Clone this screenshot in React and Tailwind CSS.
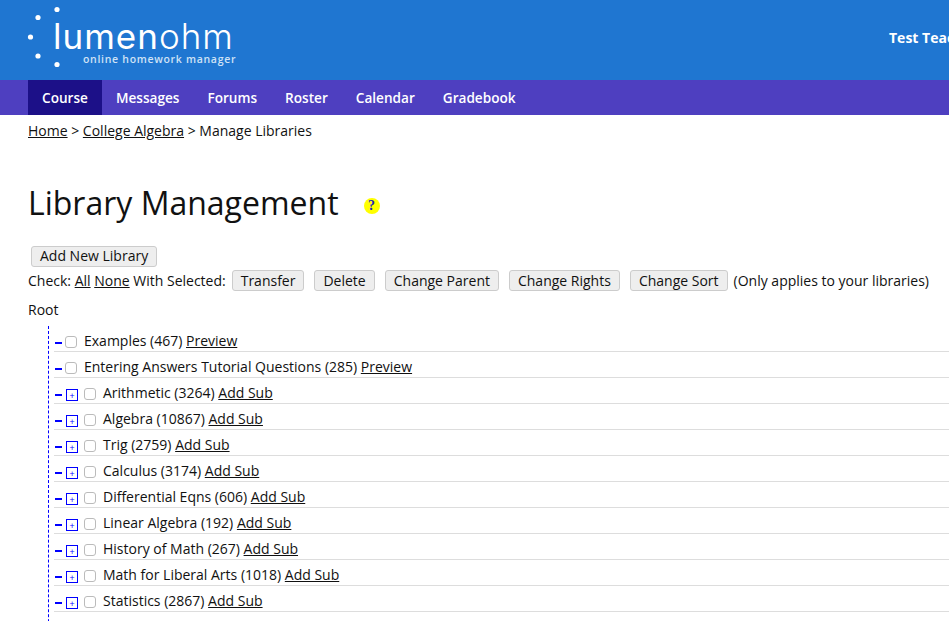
import React from 'react';

const libraries = [
    { name: 'Examples (467)', link: 'Preview' },
    { name: 'Entering Answers Tutorial Questions (285)', link: 'Preview' },
    { name: 'Arithmetic (3264)', link: 'Add Sub', folder: true },
    { name: 'Algebra (10867)', link: 'Add Sub', folder: true },
    { name: 'Trig (2759)', link: 'Add Sub', folder: true },
    { name: 'Calculus (3174)', link: 'Add Sub', folder: true },
    { name: 'Differential Eqns (606)', link: 'Add Sub', folder: true },
    { name: 'Linear Algebra (192)', link: 'Add Sub', folder: true },
    { name: 'History of Math (267)', link: 'Add Sub', folder: true },
    { name: 'Math for Liberal Arts (1018)', link: 'Add Sub', folder: true },
    { name: 'Statistics (2867)', link: 'Add Sub', folder: true },
];

const navItems = ['Messages', 'Forums', 'Roster', 'Calendar', 'Gradebook'];
const actions = ['Transfer', 'Delete', 'Change Parent', 'Change Rights', 'Change Sort'];

function Btn({ children }) {
    return (
        <span className="inline-flex h-[21px] items-center rounded-[3px] border border-[#ccc] bg-[#eee] px-2 text-[14px] leading-none text-[#111]">
            {children}
        </span>
    );
}

function Check() {
    return <span className="block h-3 w-3 shrink-0 rounded-[3px] border border-[#bbb] bg-white" />;
}

function Logo() {
    return (
        <div className="relative h-20 w-[889px] shrink-0 pl-[53px] pt-[21px]">
            <svg className="absolute left-0 top-0" width="70" height="80" viewBox="0 0 70 80" fill="white">
                <circle cx="57" cy="9.5" r="2.6" />
                <circle cx="38" cy="17.5" r="2.6" />
                <circle cx="30.5" cy="37" r="2.6" />
                <circle cx="38" cy="56" r="2.6" />
                <circle cx="57" cy="64.5" r="2.6" />
            </svg>
            <div className="font-['Inter',sans-serif] text-[35px] leading-[30px] tracking-[1px] text-white">
                <span className="font-normal">lumen</span>
                <span className="font-light">ohm</span>
            </div>
            <div className="ml-[30px] mt-px font-['Open_Sans',sans-serif] text-[10.5px] font-semibold leading-[14px] tracking-[0.7px] text-[#cfe2f6]">
                online homework manager
            </div>
        </div>
    );
}

export default function App() {
    return (
        <div className="h-[621px] w-[949px] overflow-hidden bg-white font-['Open_Sans',sans-serif] text-[14px] text-[#111]">
            {/* Header */}
            <header className="flex h-20 bg-[#1f76d1]">
                <Logo />
                <div className="whitespace-nowrap pt-[28px] text-[14px] font-bold leading-5 text-white">Test Teacher</div>
            </header>

            {/* Nav */}
            <nav className="flex h-[35px] items-center bg-[#4e3fc0] pl-7 text-[13.6px] font-semibold text-white">
                <span className="flex h-full w-[74px] items-center justify-center bg-[#1c1088] pt-px">Course</span>
                <div className="ml-3.5 flex gap-7 pt-px">
                    {navItems.map((item) => (
                        <span key={item}>{item}</span>
                    ))}
                </div>
            </nav>

            <main className="pl-7">
                <div className="pt-[6px] leading-5">
                    <a className="underline">Home</a> &gt; <a className="underline">College Algebra</a> &gt; Manage Libraries
                </div>

                <div className="mt-10 flex items-center">
                    <h1 className="text-[32px] leading-[44px]">Library Management</h1>
                    <span className="ml-[25px] mt-[6px] flex h-4 w-4 items-center justify-center rounded-full bg-[#ffff00] font-['Liberation_Serif',serif] text-[14px] font-bold leading-none text-[#2222bb]">?</span>
                </div>

                <div className="ml-[3px] mt-5">
                    <Btn>Add New Library</Btn>
                </div>

                <div className="mt-[2px] flex h-6 items-center whitespace-nowrap">
                    <span>Check: <a className="underline">All</a> <a className="underline">None</a> With Selected:</span>
                    <div className="ml-[6px] flex gap-[10px]">
                        {actions.map((a) => (
                            <Btn key={a}>{a}</Btn>
                        ))}
                    </div>
                    <span className="ml-[6px]">(Only applies to your libraries)</span>
                </div>

                <div className="mt-[7px] leading-5">Root</div>

                {/* Library tree */}
                <div className="ml-5 mt-[6px] border-l border-dashed border-[#0000ff] pb-10 pl-[5px]">
                    {libraries.map((lib) => (
                        <div key={lib.name} className="flex h-[26px] items-center whitespace-nowrap border-b border-[#ddd] pt-1">
                            <span className="ml-px mt-[6px] h-[1.5px] w-[7px] shrink-0 bg-[#0000ff]" />
                            {lib.folder ? (
                                <>
                                    <span className="ml-1 mt-[6px] flex h-3 w-3 shrink-0 items-center justify-center border border-[#0000ff] text-[9px] leading-none text-[#0000ff]">+</span>
                                    <span className="ml-[6px] mt-1"><Check /></span>
                                    <span className="ml-[7px]">{lib.name} <a className="underline">{lib.link}</a></span>
                                </>
                            ) : (
                                <>
                                    <span className="ml-[3px] mt-1"><Check /></span>
                                    <span className="ml-[7px]">{lib.name} <a className="underline">{lib.link}</a></span>
                                </>
                            )}
                        </div>
                    ))}
                </div>
            </main>
        </div>
    );
}
